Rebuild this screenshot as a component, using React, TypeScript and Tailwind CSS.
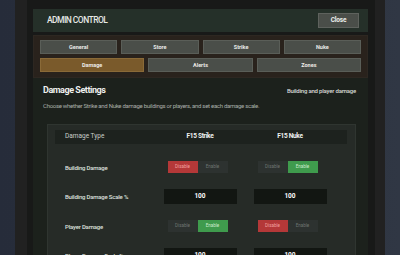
const tabsTop = ["General", "Store", "Strike", "Nuke"];
const tabsBottom = ["Damage", "Alerts", "Zones"];

const rows = [
  { label: "Building Damage", kind: "toggle", strike: false, nuke: true },
  { label: "Building Damage Scale %", kind: "input", strike: "100", nuke: "100" },
  { label: "Player Damage", kind: "toggle", strike: true, nuke: false },
  { label: "Player Damage Scale %", kind: "input", strike: "100", nuke: "100" },
] as const;

const font = { fontFamily: 'Roboto, "Liberation Sans", sans-serif' };

function Toggle({ on }: { on: boolean }) {
  return (
    <div className="flex justify-center pr-[5px]">
      <div className="flex h-[12px]">
        <div
          className={`flex w-[30px] items-center justify-center text-[4.5px] ${
            on ? "bg-[#2d3230] text-[#6f7572]" : "bg-[#b43838] text-[#f2a0a0]"
          }`}
        >
          Disable
        </div>
        <div
          className={`flex w-[30px] items-center justify-center text-[4.5px] ${
            on ? "bg-[#3f9b4d] text-[#cdeccf]" : "bg-[#2d3230] text-[#6f7572]"
          }`}
        >
          Enable
        </div>
      </div>
    </div>
  );
}

function ScaleInput({ value }: { value: string }) {
  return (
    <div className="flex justify-center">
      <div className="flex h-[15px] w-[73px] items-center justify-center bg-[#121612] text-[6.5px] font-bold text-white">
        {value}
      </div>
    </div>
  );
}

export default function App() {
  return (
    <div
      className="h-[255px] w-[400px] overflow-hidden bg-gradient-to-r from-[#262c3a] via-[#2a303c] to-[#303744] px-[15px]"
      style={font}
    >
      <div className="h-full bg-[#212121] pl-[12px] pr-[10px]">
        <div className="h-full bg-[#181918] px-[6px] pr-[7px] pt-[9px]">
          {/* header */}
          <div className="flex h-[23px] items-center justify-between bg-[#253029] pl-[14px] pr-[9px]">
            <span className="text-[8.5px] font-medium tracking-[-0.55px] text-[#e6e8e6]">ADMIN CONTROL</span>
            <button className="flex h-[15px] w-[41px] items-center justify-center border border-[#5e625d] bg-[#4a4e49] text-[6.5px] font-bold tracking-[-0.2px] text-[#eceeec]">
              Close
            </button>
          </div>

          {/* tabs */}
          <div className="mt-[3px] flex flex-col gap-[4px] border border-[#2d2721] bg-[#29221c] px-[6px] pb-[5px] pt-[4px]">
            <div className="grid grid-cols-4 gap-[4px]">
              {tabsTop.map((t) => (
                <div
                  key={t}
                  className="flex h-[14px] items-center justify-center border border-[#5a5e58] bg-[#4a4e49] text-[5.5px] font-bold text-[#e8eae8]"
                >
                  {t}
                </div>
              ))}
            </div>
            <div className="grid grid-cols-3 gap-[4px]">
              {tabsBottom.map((t) => (
                <div
                  key={t}
                  className={`flex h-[14px] items-center justify-center border text-[5.5px] font-bold text-[#eceae6] ${
                    t === "Damage" ? "border-[#8a6a38] bg-[#7a5a2b]" : "border-[#5a5e58] bg-[#4a4e49]"
                  }`}
                >
                  {t}
                </div>
              ))}
            </div>
          </div>

          {/* content */}
          <div className="h-full bg-[#1c211c] pl-[10px] pr-[12px] pt-[6px]">
            <div className="flex items-center justify-between">
              <span className="text-[9px] font-bold tracking-[-0.45px] text-[#eef0ee]">Damage Settings</span>
              <span className="text-[6px] font-medium tracking-[-0.2px] text-[#d8dbd8]">Building and player damage</span>
            </div>
            <div className="mt-[3px] text-[6px] tracking-[-0.28px] text-[#a9aea9]">
              Choose whether Strike and Nuke damage buildings or players, and set each damage scale.
            </div>

            <div className="ml-[4px] mt-[14px] border border-[#2f3530] bg-[#262b27] pl-[7px] pr-[8px] pt-[5px]">
              <div className="grid h-[14px] grid-cols-[90px_90px_90px] items-center bg-[#1d221e] pl-[10px]">
                <span className="text-[6.5px] text-[#c9cdc9]">Damage Type</span>
                <span className="text-center text-[6.5px] font-bold tracking-[-0.3px] text-[#f0f2f0]">F15 Strike</span>
                <span className="text-center text-[6.5px] font-bold tracking-[-0.3px] text-[#f0f2f0]">F15 Nuke</span>
              </div>
              <div className="mt-[9px] flex flex-col">
                {rows.map((r) => (
                  <div key={r.label} className="grid h-[29.5px] grid-cols-[90px_90px_90px] items-center pl-[10px]">
                    <span className="text-[6px] font-medium tracking-[-0.2px] text-[#dfe2df]">{r.label}</span>
                    {r.kind === "toggle" ? (
                      <>
                        <Toggle on={r.strike as boolean} />
                        <Toggle on={r.nuke as boolean} />
                      </>
                    ) : (
                      <>
                        <ScaleInput value={r.strike as string} />
                        <ScaleInput value={r.nuke as string} />
                      </>
                    )}
                  </div>
                ))}
              </div>
            </div>
          </div>
        </div>
      </div>
    </div>
  );
}
